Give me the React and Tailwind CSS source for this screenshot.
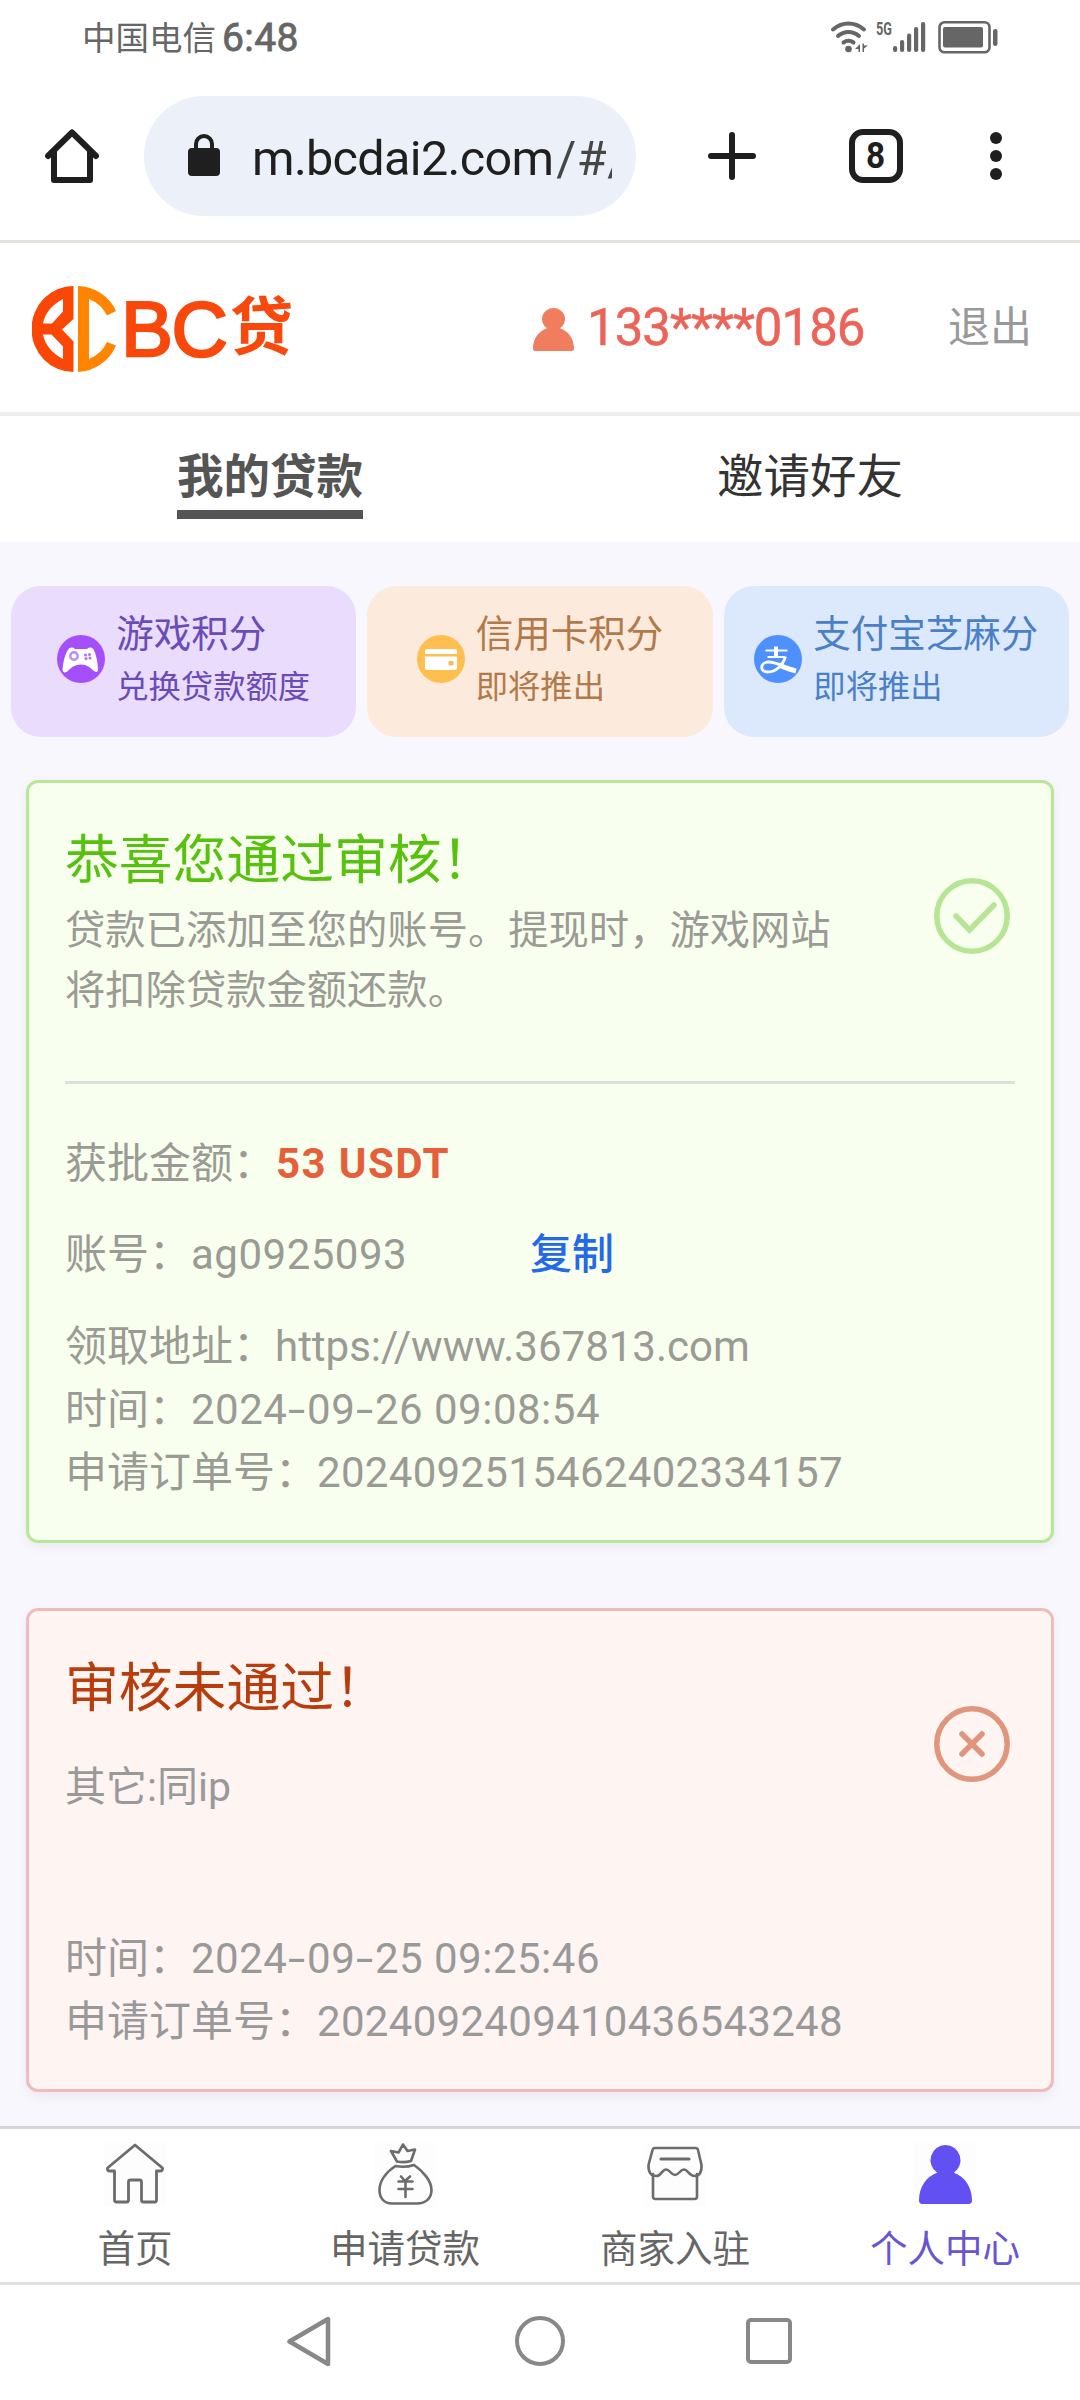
import React from "react";

const FONT = "font-['Roboto','Noto_Sans_CJK_SC',sans-serif]";

function StatusBar() {
  return (
    <div className="flex h-[75px] items-center pl-[82px] pr-[82px] text-[#666]">
      <span className="pt-[1px] text-[33.5px] leading-[75px]">中国电信</span>
      <span className="ml-[6px] pt-[1px] text-[39px] leading-[75px] tracking-[0.4px] [-webkit-text-stroke:0.8px_#666]">6:48</span>
      <svg className="ml-auto mt-[-2px]" width="168" height="34" viewBox="0 0 168 34">
        <g fill="none" stroke="#666" strokeWidth="4" strokeLinecap="round">
          <path d="M3 9.5C12.500 1.500 24.500 1.500 34 9.500" />
          <path d="M8 16C14 10.500 23 10.500 29 16" />
          <path d="M13.500 22.500C17 20 20 20 23.500 22.500" />
        </g>
        <circle cx="18.500" cy="29" r="3.300" fill="#666" />
        <path d="M30 24v8h-1.500v-3l-3.500 0zM32.500 23.500v8.500h1.500v-3.500l4-3h-4v-2z" fill="#666" />
        <text x="46" y="14.500" fontSize="18.500" fontWeight="700" fill="#666" fontFamily="Roboto" textLength="16" lengthAdjust="spacingAndGlyphs">5G</text>
        <g fill="#666">
          <rect x="63" y="26" width="4.200" height="6" rx="2" />
          <rect x="70" y="20" width="4.200" height="12" rx="2" />
          <rect x="77" y="13.500" width="4.200" height="18.500" rx="2" />
          <rect x="84" y="7" width="4.200" height="25" rx="2" />
          <rect x="91" y="2" width="4.200" height="30" rx="2" />
          <rect x="113" y="7" width="40" height="20.500" rx="2" />
          <rect x="163" y="9" width="4.500" height="17" rx="2.200" />
        </g>
        <rect x="109.500" y="2.300" width="50" height="30" rx="5" fill="none" stroke="#666" strokeWidth="2.600" />
      </svg>
    </div>
  );
}

function BrowserBar() {
  return (
    <div className="flex h-[165px] items-start pt-[21px]">
      <div className="flex h-[120px] w-[144px] items-center pl-[45px]">
        <svg width="54" height="54" viewBox="0 0 54 54" fill="none" stroke="#1f1f1f" strokeWidth="6" strokeLinecap="round" strokeLinejoin="round">
          <path d="M3 27L27 3.500 51 27" />
          <path d="M9 23v28h36V23" />
        </svg>
      </div>
      <div className="flex h-[120px] w-[492px] items-center rounded-full bg-[#ecf0f9] pl-[44px]">
        <svg width="32" height="42" viewBox="0 0 32 42" className="mt-[-2px] shrink-0">
          <rect y="14" width="32" height="28" rx="4" fill="#1f1f1f" />
          <path d="M8 17v-7a8 8 0 0 1 16 0v7" fill="none" stroke="#1f1f1f" strokeWidth="4" />
        </svg>
        <div className="ml-[32px] w-[360px] overflow-hidden whitespace-nowrap pt-[5px] text-[48.5px] leading-[70px] tracking-[-0.65px] text-[#1f1f1f]">
          m.bcdai2.com<span className="ml-[3px] tracking-[0.5px] text-[#444746]">/#/</span>
        </div>
      </div>
      <div className="flex h-[120px] flex-1 items-center pl-[72px]">
        <svg width="48" height="48" viewBox="0 0 48 48" stroke="#1f1f1f" strokeWidth="6" strokeLinecap="round">
          <path d="M24 3v42M3 24h42" />
        </svg>
        <div className="ml-[93px] flex h-[54px] w-[54px] items-center justify-center rounded-[14px] border-[6px] border-[#1f1f1f]">
          <span className="scale-x-90 text-[37px] font-bold leading-[42px] text-[#1f1f1f]">8</span>
        </div>
        <div className="ml-[87px] flex flex-col gap-[6px]">
          <i className="h-[12px] w-[12px] rounded-full bg-[#1f1f1f]" />
          <i className="h-[12px] w-[12px] rounded-full bg-[#1f1f1f]" />
          <i className="h-[12px] w-[12px] rounded-full bg-[#1f1f1f]" />
        </div>
      </div>
    </div>
  );
}

function UserGlyph({ width, height, color }) {
  return (
    <svg width={width} height={height} viewBox="0 0 54 60" preserveAspectRatio="none" fill={color}>
      <path d="M27 0a15.500 15.500 0 0 1 8.500 28.300C46.500 32 54 43 54 56.500q0 3.500-3.500 3.500h-47Q0 60 0 56.500C0 43 7.500 32 18.500 28.300A15.500 15.500 0 0 1 27 0z" />
    </svg>
  );
}

function Header() {
  return (
    <div className="flex h-[176px] items-center border-b-4 border-t-[3px] border-[#efefef] border-t-[#e0e3de] bg-white pt-[3px]">
      <svg className="ml-[32px] shrink-0" width="85" height="86" viewBox="0 0 85 86">
        <path fillRule="evenodd" fill="#fb4706" d="M41.500 0A42 43 0 0 0 41.500 86V55.500L30 43.500 41.500 33ZM31 13V25.500L20 37.500H11Q14 22 31 13ZM11 48.500H19.500L31 60.500V73Q14 64 11 48.500Z" />
        <path fill="#ff8400" d="M46 0A43 43 0 0 1 84 25L75 29.500Q69.500 18 57 13V73Q69.500 68 75 56L84 59.500A43 43 0 0 1 46 86Z" />
      </svg>
      <div className="flex w-[416px] items-center whitespace-nowrap pl-[4px] text-[#f9480c]">
        <span className="w-[109px] font-['Liberation_Sans'] text-[78px] leading-[90px] tracking-[-1.5px] [-webkit-text-stroke:2.4px_#f9480c]">BC</span>
        <span className="-mt-[2px] text-[63px] font-bold leading-[90px]">贷</span>
      </div>
      <UserGlyph width={41} height={43} color="#ef7d5e" />
      <span className="-mt-[3px] ml-[13px] w-[361px] text-[51px] leading-[80px] tracking-[-1px] text-[#ec6358] [-webkit-text-stroke:0.5px_#ec6358]">133****0186</span>
      <span className="-mt-[3px] whitespace-nowrap text-[42px] leading-[80px] text-[#999]">退出</span>
    </div>
  );
}

function Tabs() {
  return (
    <div className="grid h-[126px] grid-cols-2 bg-white text-center text-[46.5px] leading-[66px]">
      <div className="pt-[28px]">
        <span className="inline-block border-b-[9px] border-[#555] font-bold text-[#555]">我的贷款</span>
      </div>
      <div className="pt-[28px] text-[#333]">邀请好友</div>
    </div>
  );
}

function GameIcon() {
  return (
    <svg width="48" height="48" viewBox="0 0 48 48" className="shrink-0">
      <circle cx="24" cy="24" r="24" fill="#a44ffb" />
      <path d="M12 13.500Q15 11.500 18 14H30Q33 11.500 36 13.500C39 18 41 28 41 35Q40.500 38.500 37 36C33 32.500 30 29.500 24 29.500S14 32.500 10.500 36.500Q6 39 5.500 35C6 28 8 18 12 13.500Z" fill="#fff" />
      <circle cx="17" cy="21" r="3.700" fill="none" stroke="#b98af5" strokeWidth="2.400" />
      <g fill="#a874f0"><circle cx="28.500" cy="20" r="1.500" /><circle cx="32.500" cy="19.500" r="1.500" /><circle cx="29" cy="23.500" r="1.500" /><circle cx="33" cy="23" r="1.500" /></g>
    </svg>
  );
}

function CardIcon() {
  return (
    <svg width="48" height="48" viewBox="0 0 48 48" className="shrink-0">
      <circle cx="24" cy="24" r="24" fill="#febf50" />
      <path d="M10 14h28q2 0 2 2v3H8v-3q0-2 2-2zM8 21.500h32V33q0 2-2 2H10q-2 0-2-2z" fill="#fff" />
      <rect x="31.500" y="26" width="5" height="4.500" rx="1" fill="#f9b95a" />
    </svg>
  );
}

function AlipayIcon() {
  return (
    <svg width="48" height="48" viewBox="0 0 48 48" className="shrink-0">
      <circle cx="24" cy="24" r="24" fill="#4d90fe" />
      <g fill="none" stroke="#fff" strokeLinecap="butt">
        <path d="M22 11.500v10" strokeWidth="4" />
        <path d="M11.500 15.500h22M13.500 22h17" strokeWidth="2.200" />
        <path d="M31.500 21.500C29 30 22 37 13.500 37C5.500 37 6 27.500 14 27C22 26.700 28 31 42 36" strokeWidth="2.800" />
        <path d="M27 31Q34 34 42 36" strokeWidth="5" />
      </g>
    </svg>
  );
}

function ScoreCard({ icon, title, sub, className }) {
  return (
    <div className={"flex h-[151px] items-center justify-center gap-[11px] rounded-[30px] pb-[5px] " + className}>
      {icon}
      <div className="whitespace-nowrap pt-[3px]">
        <div className="text-[37.5px] leading-[53px]">{title}</div>
        <div className="text-[32.3px] leading-[53px]">{sub}</div>
      </div>
    </div>
  );
}

function Timestamp({ date, time }) {
  const parts = date.split("-");
  return (
    <span className="tracking-[0.5px]">
      {parts.map((part, i) => (
        <React.Fragment key={i}>
          {i > 0 && <span className="mx-[4px] inline-block scale-x-[1.5] tracking-normal">-</span>}
          {part}
        </React.Fragment>
      ))}{" "}
      {time}
    </span>
  );
}

function ApprovedCard() {
  return (
    <div className="mx-[26px] mt-[43px] h-[763px] rounded-[12px] border-[3px] border-[#b9e798] bg-[#f9ffee] px-[36px] pt-[37px] text-[42px] leading-[63px] text-[#999b94] shadow-[0_4px_12px_rgba(0,0,0,0.06)]">
      <div className="flex items-start justify-between">
        <div>
          <div className="text-[53.8px] leading-[81px] text-[#57c20e]">恭喜您通过审核！</div>
          <div className="w-[790px] text-[40.3px] leading-[60px]">
            贷款已添加至您的账号。提现时，游戏网站
            <br />
            将扣除贷款金额还款。
          </div>
        </div>
        <svg className="mr-[5px] mt-[58px] shrink-0" width="76" height="76" viewBox="0 0 76 76" fill="none" stroke="#b6e596" strokeWidth="5.500" strokeLinecap="round">
          <circle cx="38" cy="38" r="35.200" />
          <path d="M22 38L35.500 52 60 27" />
        </svg>
      </div>
      <div className="mt-[60px] h-[3px] bg-[#dde0da]" />
      <p className="mt-[48px]">
        获批金额：<b className="ml-[1px] font-bold tracking-[1.4px] text-[#e55f3a]">53 USDT</b>
      </p>
      <p className="mt-[28px] flex">
        <span className="w-[465px]">账号：<span className="tracking-[0.5px]">ag0925093</span></span>
        <span className="font-medium text-[#2469e6]">复制</span>
      </p>
      <p className="mt-[29px]">领取地址：https://www.367813.com</p>
      <p>时间：<Timestamp date="2024-09-26" time="09:08:54" /></p>
      <p>申请订单号：<span className="tracking-[0.3px]">2024092515462402334157</span></p>
    </div>
  );
}

function RejectedCard() {
  return (
    <div className="mx-[26px] mt-[65px] h-[484px] rounded-[12px] border-[3px] border-[#eebcbc] bg-[#fef4f2] px-[36px] pt-[37px] text-[42px] leading-[63px] text-[#999] shadow-[0_4px_12px_rgba(0,0,0,0.06)]">
      <div className="flex items-start justify-between">
        <div>
          <div className="text-[53.8px] leading-[81px] text-[#b93c0c]">审核未通过！</div>
          <div className="mt-[28px] text-[41px] leading-[60px]">其它:同ip</div>
        </div>
        <svg className="mr-[5px] mt-[58px] shrink-0" width="76" height="76" viewBox="0 0 76 76" fill="none" stroke="#df967c" strokeWidth="5.500" strokeLinecap="round">
          <circle cx="38" cy="38" r="35.200" />
          <path d="M28 28L48 48M48 28L28 48" />
        </svg>
      </div>
      <p className="mt-[110px]">时间：<Timestamp date="2024-09-25" time="09:25:46" /></p>
      <p>申请订单号：<span className="tracking-[0.3px]">2024092409410436543248</span></p>
    </div>
  );
}

function HomeGlyph() {
  return (
    <svg width="58" height="62" viewBox="0 0 58 62" fill="none" stroke="#6c6c6c" strokeWidth="2.800" strokeLinejoin="round">
      <path d="M29 2L56.500 25Q57 28 54 28H50.500V57Q50.500 59 48.500 59H37.500Q35.500 59 35.500 57V39Q35.500 37 33.500 37H24.500Q22.500 37 22.500 39V57Q22.500 59 20.500 59H10.500Q8.500 59 8.500 57V28H4Q1 28 1.500 25Z" />
    </svg>
  );
}

function BagGlyph() {
  return (
    <svg width="58" height="62" viewBox="0 0 58 62" fill="none" stroke="#6c6c6c" strokeWidth="2.600" strokeLinejoin="round" strokeLinecap="round">
      <path d="M21 18.500L15 8 22.500 9.500 27 1.500 31.500 8 39 6.500 35 18Q28 20 21 18.500Z" />
      <path d="M19.500 23Q29 25 38 22C47 28 55.500 38 55.500 47C55.500 56 49 60.500 41 60.500H16C8 60.500 3.500 55 3.500 47C3.500 38 10 29 19.500 23Z" />
      <path d="M25 33.500L29 38 34 33.500M22.500 38.500H36.500M22.500 46H36.500M29.500 38.500V54" />
    </svg>
  );
}

function ShopGlyph() {
  return (
    <svg width="58" height="62" viewBox="0 0 58 62" fill="none" stroke="#6c6c6c" strokeWidth="2.600" strokeLinejoin="round" strokeLinecap="round">
      <path d="M7 31V53.500Q7 56 9.500 56H48.500Q51 56 51 53.500V31" />
      <path d="M9 5H49.500Q51.500 5 52 7L55.500 22Q56 33 48.500 33C43 33 42 26.500 38 26.500C34 26.500 33 32 29 32C25 32 24 26.500 20 26.500C16 26.500 15 33 10.500 33Q2 33 2.500 22L6.500 7Q7 5 9 5Z" />
      <path d="M15 16H43" strokeWidth="3.200" />
    </svg>
  );
}

function BottomNav() {
  const items = [
    { label: "首页", icon: <HomeGlyph /> },
    { label: "申请贷款", icon: <BagGlyph /> },
    { label: "商家入驻", icon: <ShopGlyph /> },
    { label: "个人中心", icon: <UserGlyph width={53} height={59} color="#6250f3" />, active: true },
  ];
  return (
    <div className="grid h-[159px] grid-cols-4 border-b-[3px] border-t-[3px] border-b-[#e0e0e0] border-t-[#d6d6d6] bg-white">
      {items.map((it) => (
        <div key={it.label} className="flex flex-col items-center pt-[13px]">
          <div className="flex h-[64px] w-[62px] items-center justify-center bg-[#fdfdfd]">{it.icon}</div>
          <span className={"mt-[14px] text-[37.5px] leading-[58px] " + (it.active ? "text-[#6a55d0]" : "text-[#666]")}>{it.label}</span>
        </div>
      ))}
    </div>
  );
}

function SystemNav() {
  return (
    <div className="flex h-[115px] items-center bg-white pb-[3px] pl-[287px]">
      <svg width="44" height="51" viewBox="0 0 44 51" fill="none" stroke="#888" strokeWidth="4.500" strokeLinejoin="round">
        <path d="M41 3V48L2.500 25.500Z" />
      </svg>
      <div className="ml-[184px] h-[50px] w-[50px] rounded-full border-[4.500px] border-[#888]" />
      <div className="ml-[181px] h-[46px] w-[46px] rounded-[5px] border-[4.500px] border-[#888]" />
    </div>
  );
}

export default function App() {
  return (
    <div className={"flex h-[2400px] w-[1080px] flex-col overflow-hidden bg-white " + FONT}>
      <StatusBar />
      <BrowserBar />
      <Header />
      <Tabs />
      <main className="flex-1 overflow-hidden bg-[#f7f7fd]">
        <div className="mx-[11px] mt-[44px] grid grid-cols-3 gap-[11px]">
          <ScoreCard icon={<GameIcon />} title="游戏积分" sub="兑换贷款额度" className="bg-[#e9dcfc] text-[#6a4bb8]" />
          <ScoreCard icon={<CardIcon />} title="信用卡积分" sub="即将推出" className="bg-[#fcebdc] text-[#b27a4a]" />
          <ScoreCard icon={<AlipayIcon />} title="支付宝芝麻分" sub="即将推出" className="bg-[#dce9fc] text-[#4a80c8]" />
        </div>
        <ApprovedCard />
        <RejectedCard />
      </main>
      <BottomNav />
      <SystemNav />
    </div>
  );
}
